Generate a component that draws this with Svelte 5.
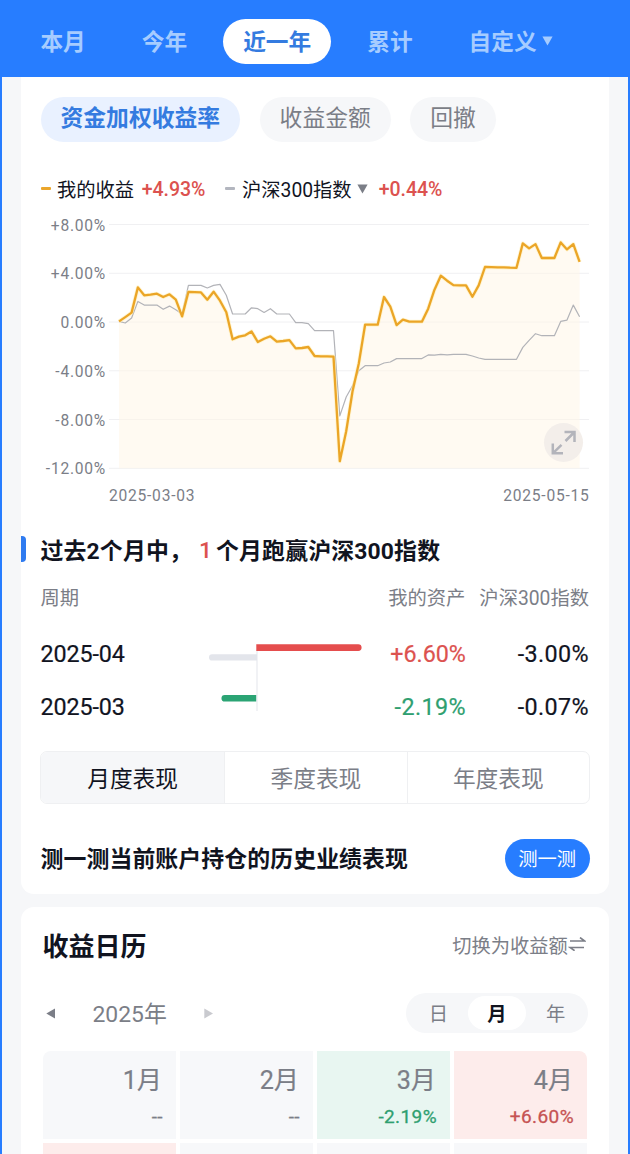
<!--
  Portfolio performance screen: range tabs, return curve, monthly comparison
  against the index, and the profit calendar.
-->

<script lang="ts">
  const ranges = ['本月', '今年', '近一年', '累计', '自定义'];
  const metrics = ['资金加权收益率', '收益金额', '回撤'];
  const periods = ['月度表现', '季度表现', '年度表现'];
  const units = ['日', '月', '年'];

  let range = $state('近一年');
  let metric = $state('资金加权收益率');
  let period = $state('月度表现');
  let unit = $state('月');

  const ticks = [8, 4, 0, -4, -8, -12];

  /* One value per calendar day, in percent */
  const mine = [
    0.05, 0.4, 0.77, 2.84, 2.19, 2.24, 2.32, 2.05, 2.27, 1.83, 0.46, 2.46, 2.45, 2.43, 1.83, 2.49,
    1.75, 0.8, -1.42, -1.2, -1.09, -0.77, -1.64, -1.37, -1.17, -1.61, -1.56, -1.48, -2.16, -2.13,
    -2.05, -2.79, -2.81, -2.81, -2.84, -11.42, -8.96, -5.7, -3.4, -0.22, -0.22, -0.22, 2.05, 1.26,
    -0.25, 0.19, 0.03, 0.03, 0.03, 1.09, 2.65, 3.8, 3.39, 3.03, 3, 3, 2.08, 3, 4.51, 4.5, 4.49,
    4.48, 4.46, 4.45, 6.45, 6.04, 6.39, 5.25, 5.25, 5.25, 6.53, 5.96, 6.39, 4.93
  ];
  const index = [
    0.05, -0.08, 0.33, 1.69, 1.39, 1.39, 1.39, 1.04, 1.31, 1.01, 0.66, 3, 3, 3, 2.79, 3, 3.09,
    2.19, 0.66, 0.66, 0.66, 1.17, 1.09, 0.79, 1.09, 0.66, 0.66, 0.66, -0.05, -0.05, -0.14, -0.71,
    -0.71, -0.71, -0.71, -7.7, -6.15, -5.22, -3.99, -3.58, -3.58, -3.58, -3.36, -3.28, -3, -3, -3,
    -3, -3, -2.7, -2.72, -2.65, -2.7, -2.65, -2.65, -2.65, -2.79, -2.95, -3.06, -3.06, -3.06,
    -3.06, -3.06, -3.06, -2.08, -1.5, -0.96, -1.12, -1.12, -1.12, 0.05, 0.16, 1.39, 0.44
  ];

  const px = (i: number) => 10 + i * 6.31;
  const py = (v: number) => 0.5 + (8 - v) * 12.19;
  const line = (data: number[]) =>
    data.map((v, i) => `${px(i).toFixed(1)},${py(v).toFixed(1)}`).join(' ');

  const minePoints = line(mine);
  const indexPoints = line(index);
  const areaPoints = `${px(0)},${py(-12)} ${minePoints} ${px(mine.length - 1)},${py(-12)}`;

  const percent = (v: number) => `${v > 0 ? '+' : ''}${v.toFixed(2)}%`;

  const rows = [
    { month: '2025-04', mine: 6.6, index: -3 },
    { month: '2025-03', mine: -2.19, index: -0.07 }
  ];

  const months = [
    { name: '1月', value: null },
    { name: '2月', value: null },
    { name: '3月', value: -2.19 },
    { name: '4月', value: 6.6 }
  ];

  /* Next calendar row, only its top edge is in view */
  const nextRow = ['gain', '', '', ''];
</script>

<div class="screen">
  <!-- ── Range tabs ── -->
  <nav class="ranges">
    {#each ranges as name}
      <button class="range" class:active={name === range} onclick={() => (range = name)}>
        {name}
        {#if name === '自定义'}
          <svg class="range-arrow" viewBox="0 0 11 10"><path d="M0.4 0.5H10.6L5.5 9.5Z" /></svg>
        {/if}
      </button>
    {/each}
  </nav>

  <main class="content">
    <section class="card performance">
      <div class="metrics">
        {#each metrics as name}
          <button class="metric" class:active={name === metric} onclick={() => (metric = name)}>
            {name}
          </button>
        {/each}
      </div>

      <div class="legend">
        <i class="dash mine"></i>
        <span>我的收益</span>
        <b class="rate">+4.93%</b>
        <i class="dash index"></i>
        <span>沪深300指数</span>
        <svg class="legend-arrow" viewBox="0 0 11 10"><path d="M0.4 0.5H10.6L5.5 9.5Z" /></svg>
        <b class="rate">+0.44%</b>
      </div>

      <!-- ── Return curve ── -->
      <div class="chart">
        <div class="ticks">
          {#each ticks as tick}
            <span>{percent(tick)}</span>
          {/each}
        </div>
        <div class="plot">
          <svg width="480" height="248" viewBox="0 0 480 248">
            {#each ticks as tick}
              <line class="grid-line" x1="0" x2="480" y1={py(tick)} y2={py(tick)} />
            {/each}
            <polygon class="area" points={areaPoints} />
            <polyline class="index-line" points={indexPoints} />
            <polyline class="glow" points={minePoints} />
            <polyline class="mine-line" points={minePoints} />
          </svg>
          <button class="expand" aria-label="全屏">
            <svg viewBox="0 0 39 39">
              <path d="M20.5 9H30.5V19M30.5 9L21.5 18M8.8 20.5V30.3H19M8.8 30.3L17.5 21.8" />
            </svg>
          </button>
        </div>
      </div>
      <div class="dates">
        <span>2025-03-03</span>
        <span>2025-05-15</span>
      </div>

      <h2 class="summary">过去2个月中，<em>1</em>个月跑赢沪深300指数</h2>

      <!-- ── Monthly comparison ── -->
      <div class="table">
        <div class="table-head">
          <span>周期</span>
          <span>我的资产</span>
          <span>沪深300指数</span>
        </div>
        <div class="table-body">
          <div class="column month">
            {#each rows as row}<span>{row.month}</span>{/each}
          </div>
          <svg class="bars" width="156" height="70" viewBox="0 0 156 70">
            <path class="bar-axis" d="M49 8V69" />
            <path class="bar-index" d="M49 12.3V18.5H4.1A3.1 3.1 0 0 1 4.1 12.3Z" />
            <path class="bar-up" d="M48.3 2.2V9H150.2A3.4 3.4 0 0 0 150.2 2.2Z" />
            <path class="bar-down" d="M48.2 52.9V59.6H16.8A3.35 3.35 0 0 1 16.8 52.9Z" />
          </svg>
          <div class="column">
            {#each rows as row}
              <span class:up={row.mine > 0} class:down={row.mine < 0}>{percent(row.mine)}</span>
            {/each}
          </div>
          <div class="column last">
            {#each rows as row}<span>{percent(row.index)}</span>{/each}
          </div>
        </div>
      </div>

      <div class="periods">
        {#each periods as name}
          <button class="period" class:active={name === period} onclick={() => (period = name)}>
            {name}
          </button>
        {/each}
      </div>

      <div class="backtest">
        <strong>测一测当前账户持仓的历史业绩表现</strong>
        <button class="backtest-btn">测一测</button>
      </div>
    </section>

    <!-- ── Profit calendar ── -->
    <section class="card calendar">
      <header class="calendar-head">
        <h2>收益日历</h2>
        <button class="switch">
          切换为收益额
          <svg viewBox="0 0 18 14"><path d="M2 4H16.6L12 0.5M16 10.5H2L6.6 13.7" /></svg>
        </button>
      </header>

      <div class="calendar-nav">
        <svg class="arrow" viewBox="0 0 10 11"><path d="M0.3 5.5L9 0.5V10.5Z" /></svg>
        <span class="year">2025年</span>
        <svg class="arrow next" viewBox="0 0 10 11"><path d="M9 5.5L0.3 0.5V10.5Z" /></svg>
        <div class="units">
          {#each units as name}
            <button class="unit" class:active={name === unit} onclick={() => (unit = name)}>
              {name}
            </button>
          {/each}
        </div>
      </div>

      <div class="months">
        {#each months as m}
          <div
            class="cell"
            class:gain={m.value !== null && m.value > 0}
            class:loss={m.value !== null && m.value < 0}
          >
            <span class="name">{m.name}</span>
            <span class="value">{m.value === null ? '--' : percent(m.value)}</span>
          </div>
        {/each}
        {#each nextRow as state}
          <div class="cell" class:gain={state === 'gain'}></div>
        {/each}
      </div>
    </section>
  </main>
</div>

<style>
  :global(body) {
    margin: 0;
    overflow: hidden;
  }

  .screen {
    --blue: #277dff;
    --ink: #11141f;
    --muted: #7b7e87;
    --red: #dc524f;
    --green: #2f9f70;
    --pale: #f6f7f9;

    width: 630px;
    height: 1154px;
    overflow: hidden;
    box-sizing: border-box;
    background: var(--blue);
    color: var(--ink);
    font-family: Roboto, 'Noto Sans CJK SC', sans-serif;
    font-size: 19.3px;
  }

  button {
    margin: 0;
    padding: 0;
    border: 0;
    background: none;
    color: inherit;
    font: inherit;
    white-space: nowrap;
  }

  h2 {
    margin: 0;
  }

  svg {
    display: block;
    flex: none;
  }

  /* ── Range tabs ── */

  .ranges {
    display: flex;
    gap: 16px;
    height: 77px;
    padding: 18.5px 0 0 20.4px;
    box-sizing: border-box;
  }

  .range {
    display: flex;
    align-items: center;
    gap: 5px;
    height: 45.5px;
    padding: 0 20px 1px;
    box-sizing: border-box;
    border-radius: 23px;
    color: #a6ccff;
    font-size: 22.7px;
    font-weight: 700;
  }

  .range.active {
    background: #fff;
    color: #347be0;
  }

  .range-arrow {
    width: 11px;
    height: 10px;
    margin-top: 1px;
    fill: #a6ccff;
  }

  /* ── Cards ── */

  .content {
    display: flex;
    flex-direction: column;
    gap: 13px;
    height: 1077px;
    margin: 0 2px;
    padding: 0 19px;
    background: var(--pale);
  }

  .card {
    flex: none;
    box-sizing: border-box;
    background: #fff;
  }

  .performance {
    height: 817px;
    padding: 19.5px 20px 0 19.5px;
    border-radius: 0 0 13px 13px;
  }

  .metrics {
    display: flex;
    gap: 19.5px;
    height: 45px;
  }

  .metric {
    padding: 0 20px 5px;
    border-radius: 23px;
    background: var(--pale);
    color: var(--muted);
    font-size: 22.8px;
  }

  .metric.active {
    background: #e9f1ff;
    color: #347be0;
    font-weight: 700;
  }

  /* ── Legend ── */

  .legend {
    display: flex;
    align-items: center;
    height: 28px;
    margin-top: 33px;
  }

  .dash {
    width: 10px;
    height: 3.5px;
    margin-right: 6.5px;
    border-radius: 1px;
    background: #eba62b;
  }

  .dash.index {
    margin-left: 20px;
    background: #b3b6bf;
  }

  .rate {
    margin-left: 7.5px;
    padding-top: 2px;
    color: var(--red);
    font-size: 19.5px;
    font-weight: 500;
  }

  .legend-arrow {
    width: 11px;
    height: 10px;
    margin: 0 3.5px 0 5px;
    fill: var(--muted);
  }

  /* ── Chart ── */

  .chart {
    display: flex;
    height: 268px;
    margin-top: 9px;
  }

  .ticks {
    width: 65.5px;
    margin-right: 3px;
    padding-top: 2px;
    color: var(--muted);
    font-size: 15.6px;
    letter-spacing: 0.75px;
    text-align: right;
  }

  .ticks span {
    display: block;
    height: 48.75px;
    line-height: 24px;
  }

  .plot {
    position: relative;
    padding-top: 12px;
  }

  .grid-line {
    stroke: #f0f0f2;
    stroke-width: 1;
  }

  .area {
    fill: #fff5e6;
    fill-opacity: 0.5;
  }

  .index-line,
  .mine-line,
  .glow {
    fill: none;
    stroke-linejoin: round;
  }

  .index-line {
    stroke: #b2b3b8;
    stroke-width: 1.2;
  }

  .mine-line {
    stroke: #eba527;
    stroke-width: 2.3;
  }

  .glow {
    stroke: #fff0b8;
    stroke-width: 4;
    stroke-opacity: 0.6;
  }

  /* Floats over the lower right corner of the plot */
  .expand {
    position: absolute;
    right: 6px;
    bottom: 18px;
    width: 39px;
    height: 39px;
    border-radius: 50%;
    background: #f3eeea;
  }

  .expand path {
    fill: none;
    stroke: #b3b4bb;
    stroke-width: 2.5;
  }

  .dates {
    display: flex;
    justify-content: space-between;
    margin: 4px -0.5px 0 68.5px;
    color: var(--muted);
    font-size: 15.6px;
    line-height: 24px;
    letter-spacing: 0.75px;
  }

  /* ── Summary ── */

  .summary {
    display: flex;
    align-items: center;
    height: 26px;
    margin: 28.5px 0 0 -19.5px;
    font-size: 22.9px;
    font-weight: 700;
    letter-spacing: 0.15px;
    white-space: nowrap;
  }

  .summary::before {
    content: '';
    width: 5px;
    height: 26px;
    margin-right: 14.5px;
    border-radius: 0 4px 4px 0;
    background: #2f7bf0;
  }

  .summary em {
    width: 17px;
    padding: 2px 0 0 7px;
    color: var(--red);
    font-style: normal;
    font-weight: 500;
  }

  /* ── Comparison table ── */

  .table-head {
    display: flex;
    height: 28px;
    margin-top: 23px;
    color: var(--muted);
    line-height: 28px;
  }

  .table-head span:first-child {
    flex: 1;
  }

  .table-head span:last-child {
    margin-left: 14px;
  }

  .table-body {
    display: flex;
    height: 106px;
    margin-top: 15px;
  }

  .column {
    width: 102.5px;
    font-size: 23.3px;
    line-height: 53px;
    text-align: right;
    -webkit-text-stroke: 0.2px currentColor;
  }

  .column span {
    display: block;
  }

  .column.month {
    width: 169px;
    letter-spacing: -0.1px;
    text-align: left;
  }

  .column.last {
    width: 124px;
    letter-spacing: 0.4px;
  }

  .up {
    color: var(--red);
  }

  .down {
    color: var(--green);
    letter-spacing: 0.4px;
  }

  .bars {
    margin-top: 13.5px;
  }

  .bar-axis {
    stroke: #eceef2;
    stroke-width: 1.5;
  }

  .bar-index {
    fill: #e3e5eb;
  }

  .bar-up {
    fill: #e54d4d;
  }

  .bar-down {
    fill: #2ba474;
  }

  /* ── Period switch ── */

  .periods {
    display: flex;
    height: 53px;
    margin: 16.5px -1px 0 -0.5px;
    box-sizing: border-box;
    border: 1px solid #eff0f2;
    border-radius: 7px;
    overflow: hidden;
  }

  .period {
    flex: 1;
    color: var(--muted);
    font-size: 22.7px;
  }

  .period + .period {
    border-left: 1px solid #eff0f2;
  }

  .period.active {
    flex: 1.01;
    background: var(--pale);
    color: var(--ink);
  }

  .backtest {
    display: flex;
    align-items: center;
    justify-content: space-between;
    height: 39px;
    margin: 35px -0.7px 0 0;
  }

  .backtest strong {
    padding-bottom: 2px;
    font-size: 22.9px;
    font-weight: 700;
    letter-spacing: 0.08px;
  }

  .backtest-btn {
    width: 85px;
    height: 39px;
    border-radius: 20px;
    background: var(--blue);
    color: #fff;
  }

  /* ── Calendar ── */

  .calendar {
    padding: 20.5px 22px 0 21.5px;
    border-radius: 13px 13px 0 0;
  }

  .calendar-head {
    display: flex;
    align-items: center;
    justify-content: space-between;
    height: 34px;
  }

  .calendar-head h2 {
    font-size: 26px;
    font-weight: 700;
  }

  .switch {
    display: flex;
    align-items: center;
    gap: 0.5px;
    margin-right: 0.7px;
    color: var(--muted);
  }

  .switch svg {
    width: 18px;
    height: 14px;
    margin-top: -2px;
  }

  .switch path {
    fill: none;
    stroke: var(--muted);
    stroke-width: 1.6;
  }

  .calendar-nav {
    display: flex;
    align-items: center;
    height: 40px;
    margin: 31.5px -1px 0 3px;
  }

  .arrow {
    width: 10px;
    height: 11px;
    fill: var(--muted);
  }

  .arrow.next {
    fill: #c9cacf;
  }

  .year {
    width: 111px;
    margin: -2px 0 0 37px;
    color: var(--muted);
    font-size: 22.9px;
    white-space: nowrap;
  }

  .units {
    display: flex;
    box-sizing: border-box;
    width: 182px;
    height: 40px;
    margin-left: auto;
    padding: 3px;
    border-radius: 20px;
    background: var(--pale);
  }

  .unit {
    flex: 1;
    border-radius: 17px;
    color: var(--muted);
  }

  .unit.active {
    background: #fff;
    color: var(--ink);
    font-weight: 700;
  }

  .months {
    display: grid;
    grid-template-columns: repeat(4, 1fr);
    gap: 3.5px;
    margin-top: 17.5px;
    border-radius: 8px 8px 0 0;
    overflow: hidden;
  }

  .cell {
    display: flex;
    flex-direction: column;
    height: 88.5px;
    padding: 13px 14px 0 0;
    box-sizing: border-box;
    background: #f7f8fa;
    color: var(--muted);
    text-align: right;
  }

  .cell .name {
    font-size: 25.2px;
    line-height: 34px;
    -webkit-text-stroke: 0.2px currentColor;
  }

  .cell .value {
    margin: 5px -1px 0 0;
    font-size: 19px;
    line-height: 27px;
    letter-spacing: 0.4px;
    -webkit-text-stroke: 0.3px currentColor;
  }

  .cell.gain {
    background: #fdeceb;
  }

  .cell.loss {
    background: #e8f6f1;
  }

  .cell.gain .value {
    color: #c65353;
  }

  .cell.loss .value {
    color: var(--green);
  }
</style>
